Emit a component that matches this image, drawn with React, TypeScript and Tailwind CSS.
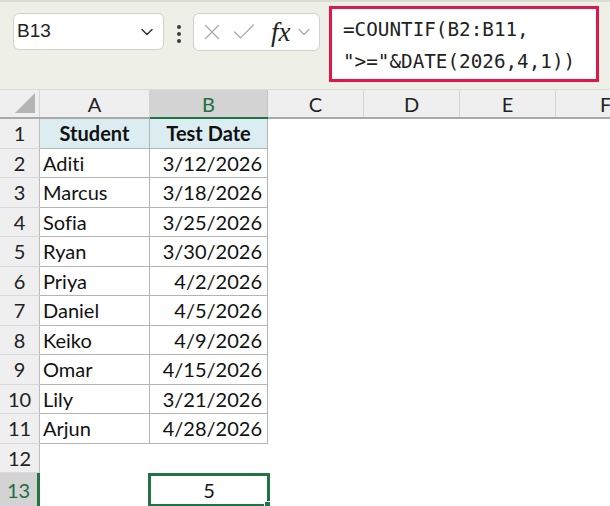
import { X, Check, ChevronDown } from "lucide-react"

const rows = [
  { name: "Aditi", date: "3/12/2026" },
  { name: "Marcus", date: "3/18/2026" },
  { name: "Sofia", date: "3/25/2026" },
  { name: "Ryan", date: "3/30/2026" },
  { name: "Priya", date: "4/2/2026" },
  { name: "Daniel", date: "4/5/2026" },
  { name: "Keiko", date: "4/9/2026" },
  { name: "Omar", date: "4/15/2026" },
  { name: "Lily", date: "3/21/2026" },
  { name: "Arjun", date: "4/28/2026" },
]

const cellFont = { fontFamily: "Lato, 'Open Sans', sans-serif" }

function RowHead({ n, active }: { n: number; active?: boolean }) {
  return (
    <div
      className={
        active
          ? "w-[40px] shrink-0 flex items-center justify-center bg-[#d3d3d3] text-[#1e6e42] border-r-[3px] border-r-[#217346] border-b border-b-[#d4d4d4]"
          : "w-[40px] shrink-0 flex items-center justify-center bg-[#efefef] text-[#222] border-r border-r-[#bdbdbd] border-b border-b-[#d8d8d8]"
      }
    >
      {n}
    </div>
  )
}

function Toolbar() {
  return (
    <div className="h-[90px] bg-[#eeefe6] border-t-2 border-t-[#dadbd1] border-b border-b-[#d9dad0] flex items-start">
      <div className="ml-[13px] mt-[11px] w-[151px] h-[37px] bg-white border border-[#d2d2cc] rounded-md flex items-center justify-between pl-[3px] pr-[6px]">
        <span className="text-[19px] text-[#222]" style={{ fontFamily: "'Liberation Sans', Arial, sans-serif" }}>
          B13
        </span>
        <ChevronDown size={20} strokeWidth={1.8} className="text-[#333]" />
      </div>
      <div className="ml-[13px] mt-[23px] flex flex-col gap-[3px]">
        <div className="w-[4px] h-[4px] rounded-full bg-[#3c3c3c]" />
        <div className="w-[4px] h-[4px] rounded-full bg-[#3c3c3c]" />
        <div className="w-[4px] h-[4px] rounded-full bg-[#3c3c3c]" />
      </div>
      <div className="ml-[12px] mt-[11px] w-[127px] h-[38px] bg-white border border-[#d2d2cc] rounded-md flex items-center pl-[5px]">
        <X size={26} strokeWidth={1.1} className="text-[#a8a8a8]" />
        <Check size={28} strokeWidth={1.1} className="text-[#a8a8a8] ml-[5px]" />
        <span
          className="ml-[13px] text-[27px] italic text-[#222] leading-none"
          style={{ fontFamily: "'Liberation Serif', 'Times New Roman', serif" }}
        >
          fx
        </span>
        <ChevronDown size={20} strokeWidth={1.4} className="text-[#a8a8a8] ml-[3px] shrink-0" />
      </div>
      <div className="ml-[9px] mt-[4px] w-[270px] h-[76px] bg-white border-[3px] border-[#e0174c] pl-[11px] pt-[5px]">
        <div
          className="text-[19.3px] leading-[32px] text-[#222] whitespace-pre"
          style={{ fontFamily: "'DejaVu Sans Mono', 'Liberation Mono', monospace" }}
        >
          {"=COUNTIF(B2:B11,\n\">=\"&DATE(2026,4,1))"}
        </div>
      </div>
    </div>
  )
}

function ColumnHeader() {
  const cols = [
    { l: "C", w: "w-[96px]" },
    { l: "D", w: "w-[96px]" },
    { l: "E", w: "w-[96px]" },
  ]
  return (
    <div className="h-[29px] flex bg-[#efefef] border-b-2 border-b-[#a9a9a9] text-[20px] text-[#222]" style={cellFont}>
      <div className="w-[40px] shrink-0 relative border-r border-r-[#d4d4d4]">
        <svg width="20" height="20" viewBox="0 0 20 20" className="absolute right-[4px] bottom-[4px]">
          <polygon points="20,0 20,20 0,20" fill="#b4b4b4" />
        </svg>
      </div>
      <div className="w-[110px] shrink-0 flex items-center justify-center border-r border-r-[#d4d4d4]">A</div>
      <div className="w-[118px] shrink-0 flex items-center justify-center bg-[#d3d3d3] text-[#1e6e42] border-r border-r-[#c4c4c4]">
        B
      </div>
      {cols.map((c) => (
        <div key={c.l} className={`${c.w} shrink-0 flex items-center justify-center border-r border-r-[#d4d4d4]`}>
          {c.l}
        </div>
      ))}
      <div className="flex-1 flex items-center justify-start pl-[44px]">F</div>
    </div>
  )
}

export default function App() {
  return (
    <div className="w-[610px] h-[506px] overflow-hidden bg-white">
      <Toolbar />
      <ColumnHeader />
      <div className="text-[20px] text-[#111] relative [font-variant-ligatures:none]" style={cellFont}>
        {/* green underline under selected column header */}
        <div className="absolute left-[150px] -top-[2px] w-[118px] h-[2px] bg-[#217346]" />
        <div className="flex h-[29.5px]">
          <RowHead n={1} />
          <div className="w-[110px] shrink-0 flex items-center justify-center font-bold bg-[#dcedf2] border-r border-b border-[#b4b4b4]">
            Student
          </div>
          <div className="w-[118px] shrink-0 flex items-center justify-center font-bold bg-[#dcedf2] border-r border-b border-[#b4b4b4]">
            Test Date
          </div>
        </div>
        {rows.map((r, i) => (
          <div key={r.name} className="flex h-[29.5px]">
            <RowHead n={i + 2} />
            <div className="w-[110px] shrink-0 flex items-center pl-[3px] border-r border-b border-[#b4b4b4]">{r.name}</div>
            <div className="w-[118px] shrink-0 flex items-center justify-end pr-[5px] border-r border-b border-[#b4b4b4]">
              {r.date}
            </div>
          </div>
        ))}
        <div className="flex h-[29.5px]">
          <RowHead n={12} />
        </div>
        <div className="flex h-[34px]">
          <RowHead n={13} active />
          <div className="w-[108px] shrink-0" />
          <div className="relative w-[122px] shrink-0 flex items-center justify-center border-[3px] border-[#217346]">
            5
            <div className="absolute -right-[4px] -bottom-[4px] w-[7px] h-[7px] bg-[#217346] border border-white" />
          </div>
        </div>
      </div>
    </div>
  )
}
